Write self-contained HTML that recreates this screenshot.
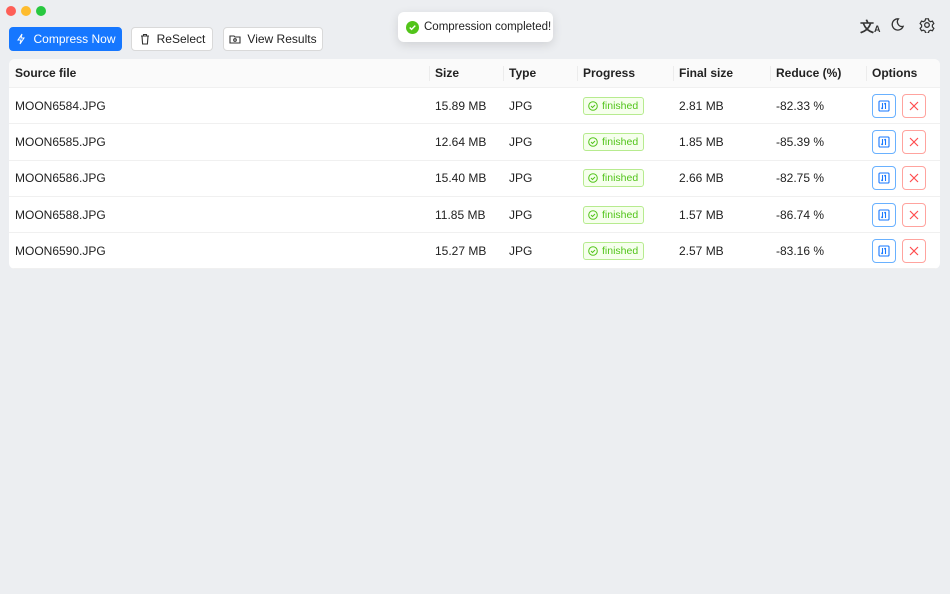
<!DOCTYPE html>
<html><head><style>
*{box-sizing:border-box;margin:0;padding:0}
body{width:950px;height:594px;background:#eceef1;font-family:"Liberation Sans",sans-serif;font-size:12px;color:#222;position:relative;overflow:hidden}
.dot{position:absolute;top:6px;width:10px;height:10px;border-radius:50%}
.btn{position:absolute;top:27px;height:24px;border-radius:4px;background:#fff;border:1px solid #d9d9d9;display:flex;align-items:center;justify-content:center;gap:6px;font-size:12px;color:#222}
.primary{background:#1677ff;border-color:#1677ff;color:#fff}
.toast{position:absolute;left:398px;top:12px;width:155px;height:30px;background:#fff;border-radius:6px;box-shadow:0 3px 10px rgba(0,0,0,.12);display:flex;align-items:center;gap:5px;padding-left:8px;font-size:11.5px;white-space:nowrap}
.toast svg{flex-shrink:0}
.table{position:absolute;left:9px;top:59px;width:931px;height:210px;background:#fff;border-radius:6px;overflow:hidden}
.hd{height:29px;background:#fafafa;border-bottom:1px solid #f0f0f0;position:relative;font-weight:bold}
.row{height:36.3px;border-bottom:1px solid #f0f0f0;position:relative}
.c{position:absolute;top:50%;transform:translateY(-50%);white-space:nowrap}
.sep{position:absolute;top:7px;height:15px;width:1px;background:#ececec}
.tag{border:1px solid #b7eb8f;background:#f6ffed;color:#52c41a;font-size:10.5px;border-radius:3px;padding:2px 5px 2px 4px;display:flex;align-items:center;gap:4px}
.ib{position:absolute;top:50%;transform:translateY(-50%);width:24px;height:24px;border-radius:4px;border:1px solid;display:flex;align-items:center;justify-content:center}
</style></head><body>
<div class="dot" style="left:6px;background:#fe5f57"></div>
<div class="dot" style="left:21px;background:#febc2e"></div>
<div class="dot" style="left:36px;background:#28c840"></div>
<div class="btn primary" style="left:9px;width:113px"><svg width="12" height="12" viewBox="0 0 12 12" fill="none" stroke="#fff" stroke-width="1"><path d="M7 1L3 7h3l-1 4 4-6H6z"/></svg>Compress Now</div>
<div class="btn" style="left:131px;width:82px"><svg width="12" height="12" viewBox="0 0 12 12" fill="none" stroke="#333" stroke-width="1.1"><path d="M2 3h8M4.5 3V1.5h3V3M3 3l.6 8h4.8L9 3"/></svg>ReSelect</div>
<div class="btn" style="left:223px;width:100px"><svg width="12" height="12" viewBox="0 0 12 12" fill="none" stroke="#333" stroke-width="1.1"><path d="M1 3h4l1 1h5v6H1z"/><circle cx="6" cy="7" r="1.3"/></svg>View Results</div>
<div class="toast"><svg width="13" height="13" viewBox="0 0 14 14"><circle cx="7" cy="7" r="7" fill="#52c41a"/><path d="M4 7l2 2 4-4" stroke="#fff" stroke-width="1.5" fill="none"/></svg>Compression completed!</div>
<div style="position:absolute;left:860px;top:17px;font-size:14px;font-weight:bold;color:#333">文<span style="font-size:9px">A</span></div>
<svg style="position:absolute;left:890px;top:17px" width="15" height="15" viewBox="0 0 16 16" fill="none" stroke="#333" stroke-width="1.4"><path d="M9 2a6 6 0 1 0 5 8A5 5 0 0 1 9 2z"/></svg>
<svg style="position:absolute;left:919px;top:17px" width="16" height="16" viewBox="0 0 16 16" fill="none" stroke="#333" stroke-width="1.3"><path d="M6.5 1.5h3l.5 2 1.7 1 2-.6 1.5 2.6-1.5 1.5v2l1.5 1.5-1.5 2.6-2-.6-1.7 1-.5 2h-3l-.5-2-1.7-1-2 .6L.8 11.5 2.3 10V8L.8 6.5l1.5-2.6 2 .6 1.7-1z" transform="scale(.95) translate(.4,.4)"/><circle cx="8" cy="8" r="2.3"/></svg>
<div class="table">
<div class="hd">
<span class="c" style="left:6px">Source file</span>
<span class="sep" style="left:420px"></span><span class="c" style="left:426px">Size</span>
<span class="sep" style="left:494px"></span><span class="c" style="left:500px">Type</span>
<span class="sep" style="left:568px"></span><span class="c" style="left:574px">Progress</span>
<span class="sep" style="left:664px"></span><span class="c" style="left:670px">Final size</span>
<span class="sep" style="left:761px"></span><span class="c" style="left:767px">Reduce (%)</span>
<span class="sep" style="left:857px"></span><span class="c" style="left:863px">Options</span>
</div>
<div id="rows"></div>
</div>
<script>
var d=[["MOON6584.JPG","15.89 MB","2.81 MB","-82.33 %"],["MOON6585.JPG","12.64 MB","1.85 MB","-85.39 %"],["MOON6586.JPG","15.40 MB","2.66 MB","-82.75 %"],["MOON6588.JPG","11.85 MB","1.57 MB","-86.74 %"],["MOON6590.JPG","15.27 MB","2.57 MB","-83.16 %"]];
var h="";d.forEach(function(r){h+='<div class="row"><span class="c" style="left:6px">'+r[0]+'</span><span class="c" style="left:426px">'+r[1]+'</span><span class="c" style="left:500px">JPG</span><span class="c tag" style="left:574px"><svg width="10" height="10" viewBox="0 0 10 10" fill="none" stroke="#52c41a"><circle cx="5" cy="5" r="4.3"/><path d="M3 5l1.5 1.5L7 4"/></svg>finished</span><span class="c" style="left:670px">'+r[2]+'</span><span class="c" style="left:767px">'+r[3]+'</span><span class="ib" style="left:863px;border-color:#69b1ff"><svg width="12" height="12" viewBox="0 0 12 12" fill="none" stroke="#1677ff" stroke-width="1.1"><rect x="1" y="1" width="10" height="10" rx="1"/><path d="M4.5 3v6M3.3 7.8l1.2 1.2M7.5 9V3M6.3 4.2l1.2-1.2"/></svg></span><span class="ib" style="left:893px;border-color:#ffa39e"><svg width="12" height="12" viewBox="0 0 12 12" stroke="#ff4d4f" stroke-width="1.2"><path d="M2 2l8 8M10 2l-8 8"/></svg></span></div>'});
document.getElementById("rows").innerHTML=h;
</script>
</body></html>
